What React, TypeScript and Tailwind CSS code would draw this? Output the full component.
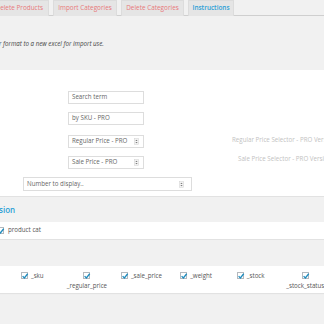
import React from "react";

const Check = ({ className = "" }: { className?: string }) => (
  <span className={"relative inline-block w-[7px] h-[7px] border border-[#b4b9be] bg-white shrink-0 " + className}>
    <svg viewBox="0 0 10 10" className="absolute left-[-1px] top-[-1px] w-[8px] h-[8px]">
      <path d="M2 5.2 L4.2 7.4 L8.4 2.2" fill="none" stroke="#1e8cbe" strokeWidth="1.6" />
    </svg>
  </span>
);

const Spinner = () => (
  <svg viewBox="0 0 6 8" className="w-[5px] h-[7px] shrink-0">
    <rect x="0.5" y="0.5" width="5" height="7" fill="#f4f4f4" stroke="#d0d0d0" strokeWidth="0.6" />
    <path d="M1.6 3.3 L3 1.8 L4.4 3.3 Z" fill="#777" />
    <path d="M1.6 4.7 L3 6.2 L4.4 4.7 Z" fill="#777" />
  </svg>
);

export default function App() {
  const tabs = [
    { label: "Delete Products", w: "w-[49px]", extra: "justify-end pr-[5px] border-l-0", active: false },
    { label: "Import Categories", w: "w-[64px]", extra: "justify-center", active: false },
    { label: "Delete Categories", w: "w-[63px]", extra: "justify-center", active: false },
    { label: "Instructions", w: "w-[46px]", extra: "justify-center", active: true },
  ];
  const fields = [
    { label: "_sku", stack: false },
    { label: "_regular_price", stack: true },
    { label: "_sale_price", stack: false },
    { label: "_weight", stack: false },
    { label: "_stock", stack: false },
    { label: "_stock_status", stack: true },
  ];
  return (
    <div className="w-[324px] h-[324px] overflow-hidden bg-[#f1f1f1] font-['Open_Sans',sans-serif] text-[6.2px] text-[#555] leading-none">
      {/* tabs */}
      <div className="flex gap-[4px] h-[16px] border-b border-[#cfcfcf]">
        {tabs.map((t, i) => (
          <div
            key={i}
            className={`${t.w} ${t.extra} shrink-0 whitespace-nowrap flex items-center h-[16px] bg-[#e5e5e5] border border-b-0 border-[#dcdcdc] text-[6.4px] ${
              t.active ? "text-[#2a9fd6] font-semibold" : "text-[#e8787a]"
            }`}
          >
            {t.label}
          </div>
        ))}
      </div>

      {/* intro */}
      <div className="h-[54px] flex items-center pt-[3px]">
        <span className="italic text-[#444] ml-[-1px] text-[6.2px] whitespace-nowrap">r format to a new excel for import use.</span>
      </div>

      {/* settings box */}
      <div className="bg-white h-[126px] pt-[21px] flex flex-col whitespace-nowrap">
        <div className="ml-[68px] w-[76px] h-[13px] border border-[#dddddd] flex items-center px-[3px] text-[#666]">Search term</div>
        <div className="ml-[68px] mt-[8px] w-[76px] h-[13px] border border-[#dddddd] flex items-center px-[3px] text-[#666]">by SKU - PRO</div>
        <div className="mt-[10px] flex items-center">
          <div className="ml-[68px] w-[76px] h-[13px] shrink-0 border border-[#dddddd] flex items-center justify-between pl-[3px] pr-[4px] text-[#666]">
            <span>Regular Price - PRO</span>
            <Spinner />
          </div>
          <span className="ml-[88px] mt-[-2px] shrink-0 text-[#c2c2c2]">Regular Price Selector - PRO Version</span>
        </div>
        <div className="mt-[8px] flex items-center">
          <div className="ml-[68px] w-[76px] h-[13px] shrink-0 border border-[#dddddd] flex items-center justify-between pl-[3px] pr-[4px] text-[#666]">
            <span>Sale Price - PRO</span>
            <Spinner />
          </div>
          <span className="ml-[94px] mt-[-6px] shrink-0 text-[#c2c2c2]">Sale Price Selector - PRO Version</span>
        </div>
        <div className="ml-[23px] mt-[8px] w-[169px] h-[14px] border border-[#dddddd] flex items-center justify-between pl-[3px] pr-[7px] text-[#666]">
          <span>Number to display..</span>
          <Spinner />
        </div>
      </div>

      {/* heading */}
      <div className="h-[26px] border-t border-[#e2e2e2] flex items-center">
        <span className="text-[#2a9fd6] text-[8px] font-semibold ml-[-1px]">sion</span>
      </div>

      {/* product cat */}
      <div className="bg-white h-[18px] border-b border-[#e2e2e2] flex items-center gap-[4px] ml-0">
        <Check className="ml-[-3px]" />
        <span>product cat</span>
      </div>

      <div className="h-[26px]" />

      {/* fields */}
      <div className="bg-white h-[27px] shadow-[0_1px_1px_rgba(0,0,0,0.06)] overflow-hidden">
        <div className="grid grid-cols-[repeat(6,54.6px)] pl-[5px] pt-[6px] w-[340px]">
          {fields.map((f, i) =>
            f.stack ? (
              <div key={i} className="flex flex-col items-center gap-[4px]">
                <Check />
                <span className="whitespace-nowrap">{f.label}</span>
              </div>
            ) : (
              <div key={i} className="flex justify-center items-start gap-[3px]">
                <Check />
                <span className="whitespace-nowrap mt-[1px]">{f.label}</span>
              </div>
            )
          )}
        </div>
      </div>
    </div>
  );
}
